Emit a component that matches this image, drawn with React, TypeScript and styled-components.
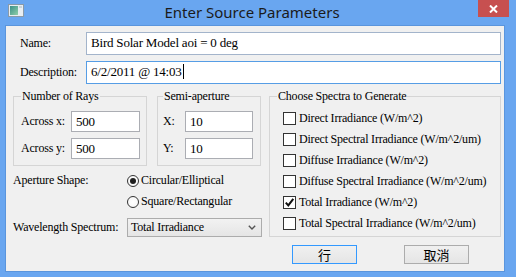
import styled, { createGlobalStyle } from "styled-components";

const GlobalStyle = createGlobalStyle`
  html, body { margin: 0; padding: 0; background: #ffffff; }
  body { font-family: "Liberation Serif", "Times New Roman", serif; }
`;

const Window = styled.div`
  width: 516px;
  height: 277px;
  box-sizing: border-box;
  background: #69a6f0;
  padding: 0 11px 5px 5px;
  display: flex;
  flex-direction: column;
`;

const TitleBar = styled.div`
  height: 25px;
  display: grid;
  grid-template-columns: 1fr auto 1fr;
  align-items: start;
  margin-right: -4px;
`;

const AppIcon = styled.svg`
  margin: 4px 0 0 3px;
  display: block;
`;

const Title = styled.div`
  font-family: "Noto Sans", "Open Sans", sans-serif;
  font-size: 15px;
  line-height: 22px;
  color: #1b1b1b;
  padding-top: 1px;
  transform: translateX(-5px);
`;

const CloseButton = styled.div`
  justify-self: end;
  width: 31px;
  height: 17px;
  background: #c75050;
  display: flex;
  align-items: center;
  justify-content: center;
`;

const Client = styled.div`
  flex: 1;
  background: #f0f0f0;
  border: 1px solid #5a95dd;
  padding: 6px 3px 0 7px;
  display: flex;
  flex-direction: column;
  font-size: 12px;
  letter-spacing: -0.2px;
  color: #000;
`;

const FieldRow = styled.div<{ $gap?: number }>`
  display: flex;
  align-items: center;
  height: 23px;
  margin-top: ${(p) => p.$gap ?? 0}px;
`;

const Label = styled.span<{ $width: number; $indent?: number }>`
  width: ${(p) => p.$width}px;
  padding-left: ${(p) => p.$indent ?? 0}px;
  flex-shrink: 0;
  white-space: nowrap;
`;

const TextBox = styled.div<{ $border?: string; $width?: number }>`
  box-sizing: border-box;
  height: 100%;
  ${(p) => (p.$width ? `width: ${p.$width}px;` : "flex: 1;")}
  background: #fff;
  border: 1px solid ${(p) => p.$border ?? "#abadb3"};
  padding: 2px 4px 0;
  display: flex;
  align-items: flex-start;
  font-size: 13px;
  line-height: 16px;
  white-space: nowrap;
`;

const Caret = styled.span`
  display: inline-block;
  width: 1px;
  height: 15px;
  background: #000;
  margin-left: 1px;
`;

const Body = styled.div`
  display: grid;
  grid-template-columns: 249px 232px;
  column-gap: 7px;
  margin-top: 5px;
`;

const LeftColumn = styled.div`
  display: flex;
  flex-direction: column;
`;

const GroupsRow = styled.div`
  display: flex;
  gap: 10px;
`;

const Group = styled.fieldset<{ $width: number; $pad?: string }>`
  box-sizing: border-box;
  width: ${(p) => p.$width}px;
  margin: 0;
  min-width: 0;
  border: 1px solid #d5d5d5;
  padding: ${(p) => p.$pad ?? "8px 6px 6px 7px"};
`;

const Legend = styled.legend`
  padding: 0 1px;
  line-height: 14px;
  font-size: 12px;
`;

const InputRow = styled.div<{ $gap?: number }>`
  display: flex;
  align-items: center;
  height: 21px;
  & + & {
    margin-top: ${(p) => p.$gap ?? 6}px;
  }
`;

const OptionGrid = styled.div`
  display: grid;
  grid-template-columns: 114px 1fr;
  margin-top: 4px;
`;

const OptionLabel = styled.div<{ $h: number }>`
  height: ${(p) => p.$h}px;
  display: flex;
  align-items: center;
  white-space: nowrap;
`;

const RadioRow = styled.div`
  height: 21px;
  display: flex;
  align-items: center;
  gap: 2px;
`;

const RadioDot = styled.span<{ $on?: boolean }>`
  box-sizing: border-box;
  width: 12px;
  height: 12px;
  border-radius: 50%;
  border: 1px solid #333;
  background: radial-gradient(circle, #fff 0%, #f4f4f4 100%);
  display: flex;
  align-items: center;
  justify-content: center;
  &::after {
    content: "";
    width: 6px;
    height: 6px;
    border-radius: 50%;
    background: ${(p) => (p.$on ? "#1e1e1e" : "transparent")};
  }
`;

const SelectRow = styled.div`
  grid-column: 1 / -1;
  display: grid;
  grid-template-columns: 114px 135px;
  margin-top: 6px;
`;

const Select = styled.div`
  box-sizing: border-box;
  height: 19px;
  border: 1px solid #acacac;
  background: linear-gradient(#f2f2f2, #e5e5e5);
  display: flex;
  align-items: center;
  justify-content: space-between;
  padding: 0 5px 0 3px;
  white-space: nowrap;
`;

const SpectraList = styled.div`
  display: flex;
  flex-direction: column;
  padding-left: 6px;
`;

const CheckRow = styled.div`
  height: 21px;
  display: flex;
  align-items: center;
  gap: 3px;
  white-space: nowrap;
`;

const CheckBox = styled.span`
  box-sizing: border-box;
  width: 13px;
  height: 13px;
  border: 1px solid #333;
  background: #fff;
  display: flex;
  align-items: center;
  justify-content: center;
`;

const ButtonRow = styled.div`
  display: flex;
  gap: 47px;
  padding-left: 23px;
  margin-top: 8px;
`;

const Button = styled.div<{ $default?: boolean }>`
  box-sizing: border-box;
  width: 65px;
  height: 19px;
  border: 1px solid ${(p) => (p.$default ? "#3399ff" : "#acacac")};
  background: linear-gradient(#f0f0f0, #e5e5e5);
  display: flex;
  align-items: center;
  justify-content: center;
  font-family: "Noto Sans CJK TC", "Noto Sans CJK SC", sans-serif;
  font-size: 13px;
  letter-spacing: 0;
`;

const spectra = [
  { label: "Direct Irradiance (W/m^2)", on: false },
  { label: "Direct Spectral Irradiance (W/m^2/um)", on: false },
  { label: "Diffuse Irradiance (W/m^2)", on: false },
  { label: "Diffuse Spectral Irradiance (W/m^2/um)", on: false },
  { label: "Total Irradiance (W/m^2)", on: true },
  { label: "Total Spectral Irradiance (W/m^2/um)", on: false },
];

export default function App() {
  return (
    <>
      <GlobalStyle />
      <Window>
        <TitleBar>
          <AppIcon width="16" height="13" viewBox="0 0 16 13">
            <defs>
              <linearGradient id="ic" x1="0" y1="0" x2="1" y2="1">
                <stop offset="0" stopColor="#3a8f8a" />
                <stop offset="1" stopColor="#8fd0a8" />
              </linearGradient>
            </defs>
            <rect x="0.5" y="0.5" width="15" height="12" fill="#e8eef2" stroke="#8a9aa8" />
            <rect x="2" y="2" width="8" height="9" fill="url(#ic)" />
            <rect x="11" y="2" width="3" height="2" fill="#c8d4dc" />
          </AppIcon>
          <Title>Enter Source Parameters</Title>
          <CloseButton>
            <svg width="9" height="8" viewBox="0 0 9 8">
              <path d="M1 0.5 L8 7.5 M8 0.5 L1 7.5" stroke="#fff" strokeWidth="2" />
            </svg>
          </CloseButton>
        </TitleBar>
        <Client>
          <FieldRow>
            <Label $width={66} $indent={7}>Name:</Label>
            <TextBox $border="#a3b4cb">Bird Solar Model aoi = 0 deg</TextBox>
          </FieldRow>
          <FieldRow $gap={6}>
            <Label $width={66} $indent={7}>Description:</Label>
            <TextBox $border="#569de5">
              6/2/2011 @ 14:03
              <Caret />
            </TextBox>
          </FieldRow>
          <Body>
            <LeftColumn>
              <GroupsRow>
                <Group $width={134}>
                  <Legend>Number of Rays</Legend>
                  <InputRow>
                    <Label $width={50}>Across x:</Label>
                    <TextBox $width={69}>500</TextBox>
                  </InputRow>
                  <InputRow>
                    <Label $width={50}>Across y:</Label>
                    <TextBox $width={69}>500</TextBox>
                  </InputRow>
                </Group>
                <Group $width={104} $pad="8px 7px 6px 5px">
                  <Legend>Semi-aperture</Legend>
                  <InputRow>
                    <Label $width={22}>X:</Label>
                    <TextBox $width={68}>10</TextBox>
                  </InputRow>
                  <InputRow>
                    <Label $width={22}>Y:</Label>
                    <TextBox $width={68}>10</TextBox>
                  </InputRow>
                </Group>
              </GroupsRow>
              <OptionGrid>
                <OptionLabel $h={21}>Aperture Shape:</OptionLabel>
                <RadioRow>
                  <RadioDot $on />
                  Circular/Elliptical
                </RadioRow>
                <div />
                <RadioRow>
                  <RadioDot />
                  Square/Rectangular
                </RadioRow>
                <SelectRow>
                  <OptionLabel $h={19}>Wavelength Spectrum:</OptionLabel>
                  <Select>
                    Total Irradiance
                    <svg width="8" height="5" viewBox="0 0 8 5">
                      <path d="M0.8 0.8 L4 4 L7.2 0.8" stroke="#555" strokeWidth="1.4" fill="none" />
                    </svg>
                  </Select>
                </SelectRow>
              </OptionGrid>
            </LeftColumn>
            <div>
              <Group $width={232} $pad="5px 6px 2px 7px">
                <Legend>Choose Spectra to Generate</Legend>
                <SpectraList>
                  {spectra.map((s) => (
                    <CheckRow key={s.label}>
                      <CheckBox>
                        {s.on && (
                          <svg width="11" height="11" viewBox="0 0 11 11">
                            <path d="M1.8 5.6 L4.3 8.4 L9.3 1.8" stroke="#111" strokeWidth="2" fill="none" />
                          </svg>
                        )}
                      </CheckBox>
                      {s.label}
                    </CheckRow>
                  ))}
                </SpectraList>
              </Group>
              <ButtonRow>
                <Button $default>行</Button>
                <Button>取消</Button>
              </ButtonRow>
            </div>
          </Body>
        </Client>
      </Window>
    </>
  );
}
